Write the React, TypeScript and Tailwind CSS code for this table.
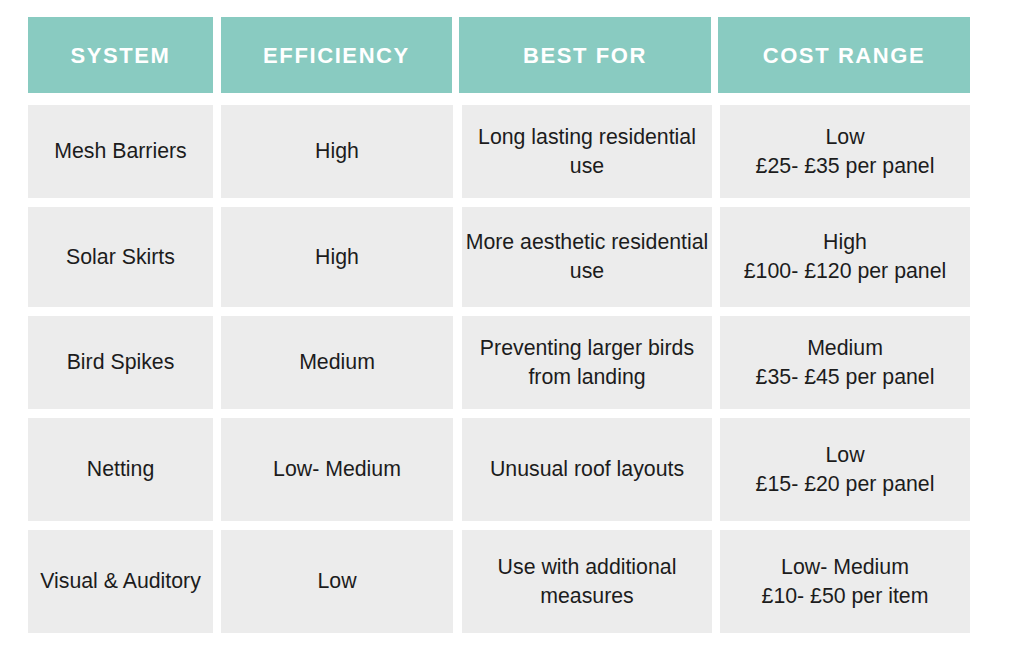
import React from 'react'

const rows = [
  { h: 'h-[93px]', cells: ['Mesh Barriers', 'High', 'Long lasting residential use', 'Low\n£25- £35 per panel'] },
  { h: 'h-[100px]', cells: ['Solar Skirts', 'High', 'More aesthetic residential use', 'High\n£100- £120 per panel'] },
  { h: 'h-[93px]', cells: ['Bird Spikes', 'Medium', 'Preventing larger birds from landing', 'Medium\n£35- £45 per panel'] },
  { h: 'h-[103px]', cells: ['Netting', 'Low- Medium', 'Unusual roof layouts', 'Low\n£15- £20 per panel'] },
  { h: 'h-[103px]', cells: ['Visual & Auditory', 'Low', 'Use with additional measures', 'Low- Medium\n£10- £50 per item'] },
]

const headCols = ['w-[185px]', 'w-[231px] ml-[8px]', 'w-[252px] ml-[7px]', 'w-[252px] ml-[7px]']
const bodyCols = ['w-[185px]', 'w-[232px] ml-[8px]', 'w-[250px] ml-[9px]', 'w-[250px] ml-[8px]']
const headers = ['SYSTEM', 'EFFICIENCY', 'BEST FOR', 'COST RANGE']

export default function App() {
  return (
    <div
      className="w-[1024px] h-[649px] bg-white pl-[28px] pt-[17px]"
      style={{ fontFamily: '"Liberation Sans", Arial, sans-serif' }}
    >
      <div className="flex h-[76px]">
        {headers.map((h, i) => (
          <div
            key={h}
            className={`${headCols[i]} flex items-center justify-center bg-[#89cbc1] text-white text-[22px] font-bold tracking-[1.6px]`}
          >
            {h}
          </div>
        ))}
      </div>

      <div className="mt-[12px] flex flex-col gap-[9px]">
        {rows.map((r, ri) => (
          <div key={ri} className={`flex ${r.h}`}>
            {r.cells.map((c, i) => (
              <div
                key={i}
                className={`${bodyCols[i]} flex items-center justify-center bg-[#ececec] px-[2px] text-center text-[21.3px] leading-[29px] text-[#1c1c1c] whitespace-pre-line`}
              >
                {c}
              </div>
            ))}
          </div>
        ))}
      </div>
    </div>
  )
}
